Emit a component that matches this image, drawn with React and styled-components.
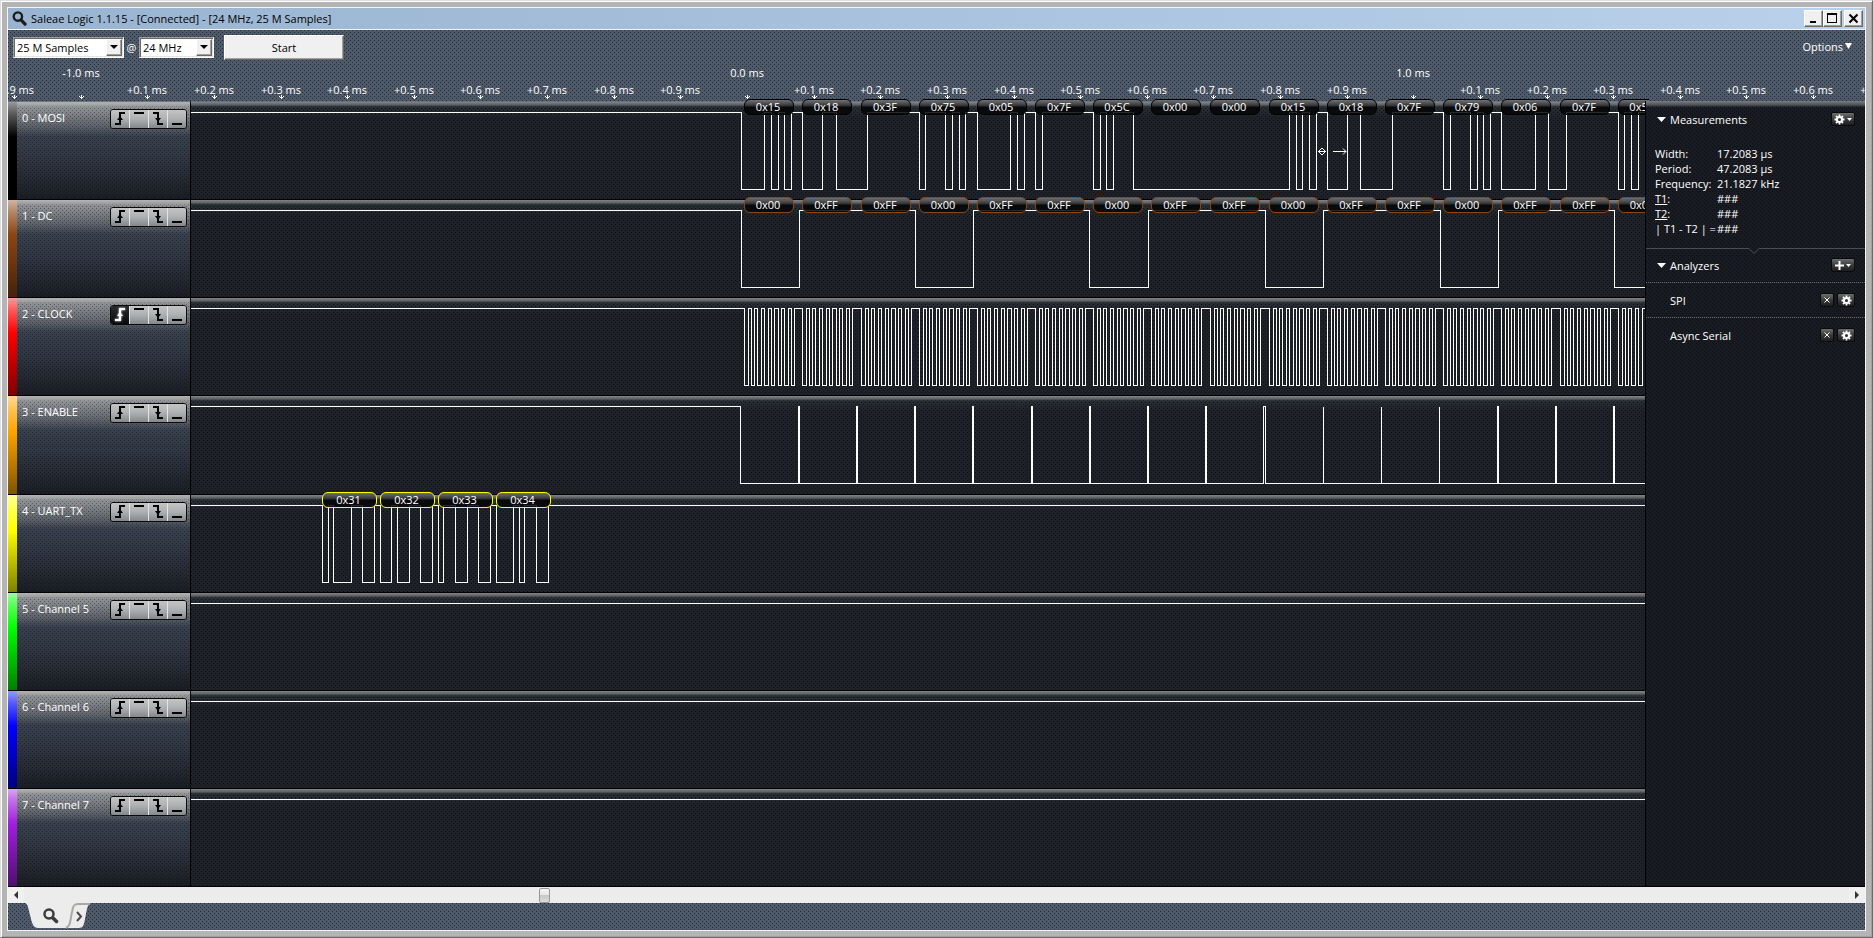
import React from "react";
import styled, { createGlobalStyle, css } from "styled-components";

const GlobalStyle = createGlobalStyle`
  *, *::before, *::after { box-sizing: border-box; }
  body { margin: 0; }
  body, button, select, input {
    font-family: "Open Sans", "Noto Sans", sans-serif;
    font-size: 11px;
    line-height: 15px;
  }
  button { padding: 0; border: 0; margin: 0; }
  ul, dl, dd, h1, h2 { margin: 0; padding: 0; font: inherit; }
  svg { display: block; }
`;

/* Perforated-metal texture: one dark pixel per tile, two staggered layers. */
const mesh = (dot) => css`
  background-image:
    conic-gradient(at 1px 1px, transparent 75%, ${dot} 0),
    conic-gradient(at 1px 1px, transparent 75%, ${dot} 0);
  background-size: 4px 4px;
  background-position: 0 0, 2px 2px;
`;

/* The same texture with a solid highlight above it and a shade below it. */
const glossMesh = (dot, highlight, shade) => css`
  background-image:
    ${highlight},
    conic-gradient(at 1px 1px, transparent 75%, ${dot} 0),
    conic-gradient(at 1px 1px, transparent 75%, ${dot} 0),
    ${shade};
  background-size: 100% 100%, 4px 4px, 4px 4px, 100% 100%;
  background-position: 0 0, 0 0, 2px 2px, 0 0;
`;

const Frame = styled.div`
  display: flex;
  min-height: 100vh;
  padding: 6px;
  background: #b4b4b4;
  border: 1px solid;
  border-color: #dedede #6a6a6a #6a6a6a #dedede;
  box-shadow: inset 1px 1px #fff, inset -1px -1px #a0a0a0;
`;

const Window = styled.main`
  flex: 1;
  min-width: 0;
  display: flex;
  flex-direction: column;
  border: 1px solid #f4f4f4;
`;

const TitleBar = styled.header`
  display: flex;
  align-items: center;
  height: 22px;
  padding: 0 2px 0 4px;
  background: linear-gradient(90deg, #99b4d1, #b9d1ea);
  border-bottom: 1px solid #f4f4f4;
`;

const Title = styled.h1`
  flex: 1;
  margin-left: 4px;
  color: #000;
`;

const WindowButton = styled.button`
  display: grid;
  place-items: center;
  width: 19px;
  height: 17px;
  margin-left: ${(p) => (p.$apart ? 2 : 0)}px;
  background: #f0f0f0;
  border: 1px solid;
  border-color: #fff #696969 #696969 #fff;
  box-shadow: inset -1px -1px #a0a0a0;
`;

const Deck = styled.div`
  background-color: #4e5969;
  ${mesh("#272d37")}
  color: #fff;
`;

const Toolbar = styled.div`
  display: flex;
  align-items: center;
  height: 34px;
  padding: 0 13px 0 5px;
`;

const Combo = styled.div`
  position: relative;
  width: ${(p) => p.$width}px;
  height: 21px;
  border: 1px solid;
  border-color: #a0a0a0 #fff #fff #a0a0a0;
  box-shadow: inset 1px 1px #696969, inset -1px -1px #e3e3e3;
  background: #fff;
`;

const ComboSelect = styled.select`
  appearance: none;
  width: 100%;
  height: 19px;
  padding: 0 18px 0 3px;
  border: 0;
  background: transparent;
  color: #000;
`;

const ComboArrow = styled.span`
  position: absolute;
  top: 1px;
  right: 1px;
  display: grid;
  place-items: center;
  width: 16px;
  height: 17px;
  background: #f0f0f0;
  color: #000;
  border: 1px solid;
  border-color: #fff #696969 #696969 #fff;
  box-shadow: inset -1px -1px #a0a0a0;
  pointer-events: none;
`;

const At = styled.span`
  width: 15px;
  text-align: center;
`;

const StartButton = styled.button`
  width: 120px;
  height: 25px;
  margin-left: 10px;
  background: #f0f0f0;
  color: #000;
  border: 1px solid;
  border-color: #fff #696969 #696969 #fff;
  box-shadow: inset -1px -1px #a0a0a0;
`;

const OptionsButton = styled.button`
  display: flex;
  align-items: center;
  gap: 2px;
  margin-left: auto;
  padding-bottom: 2px;
  background: none;
  color: #fff;
`;

const Ruler = styled.svg`
  width: 100%;
  height: 37px;
  fill: #fff;
  font-size: 11px;
`;

const Body = styled.div`
  flex: 1;
  display: grid;
  grid-template-columns: minmax(0, 1fr) 220px;
  border-bottom: 1px solid #000;
`;

const Channels = styled.ul`
  display: grid;
  grid-auto-rows: minmax(98px, 1fr);
  min-width: 0;
  list-style: none;
  overflow: clip;
  overflow-clip-margin: 4px;
`;

const Channel = styled.li`
  display: grid;
  grid-template-columns: 183px minmax(0, 1fr);
  min-width: 0;
`;

const ChannelHead = styled.div`
  display: flex;
  border-top: 1px solid ${(p) => (p.$first ? "#6d7580" : "#000")};
  border-right: 1px solid #000;
  background-color: #2c333e;
  ${glossMesh(
    "rgba(0, 0, 0, 0.36)",
    "linear-gradient(#b4b4b4, #9a9b9d 4px, transparent 5px)",
    "linear-gradient(#96989b, #898c90 8px, #5e636b 24px, #38404d 34px, #303743 55px, #1a1d24)"
  )}
`;

const ColorStrip = styled.span`
  width: 9px;
  background:
    linear-gradient(rgba(255, 255, 255, 0.6), rgba(255, 255, 255, 0.35) 12px, transparent 35px, rgba(0, 0, 0, 0.5)),
    ${(p) => p.$color};
`;

const ChannelName = styled.span`
  flex: 1;
  padding: 8px 0 0 5px;
  color: #fff;
`;

const TriggerGroup = styled.div`
  display: flex;
  align-self: flex-start;
  height: 20px;
  margin: 7px 3px 0 0;
  border: 1px solid #0a0a0a;
  border-radius: 3px;
  overflow: hidden;
`;

const TriggerButton = styled.button`
  width: 19px;
  color: ${(p) => (p.$on ? "#fff" : "#000")};
  background: ${(p) =>
    p.$on ? "linear-gradient(#2a2b2e, #0a0b0d)" : "linear-gradient(#c4c4c4, #adb0b2 50%, #85888b)"};
  &:first-child { width: 18px; }
  & + & { border-left: 1px solid #e4e4e4; }
  svg { filter: ${(p) => (p.$on ? "drop-shadow(0 0 1px #fff)" : "none")}; }
`;

const Plot = styled.div`
  position: relative;
  min-width: 0;
  border-top: 1px solid ${(p) => (p.$first ? "#6d7580" : "#000")};
  background-color: #1e2128;
  ${glossMesh(
    "#0f1115",
    "linear-gradient(#828486, #5c5f63 3px, #3a3e44 4px, transparent 5px)",
    "linear-gradient(#2c3037, #262a31 8px, transparent 16px)"
  )}
`;

const Trace = styled.svg`
  width: 100%;
  height: 96px;
  fill: none;
  stroke: #fff;
  shape-rendering: crispEdges;
`;

const Bubble = styled.span`
  position: absolute;
  top: -3px;
  width: ${(p) => p.$width}px;
  height: 16px;
  padding-right: 2px;
  border: 1px solid ${(p) => p.$edge};
  border-radius: 6px;
  background: linear-gradient(rgba(112, 114, 116, 0.95), rgba(45, 46, 48, 0.95) 6px, rgba(4, 5, 6, 0.92) 7px, rgba(6, 7, 8, 0.85));
  color: #fff;
  line-height: 14px;
  text-align: center;
  white-space: nowrap;
`;

const Side = styled.aside`
  position: relative;
  border-left: 1px solid #000;
  background-color: #181b21;
  ${glossMesh(
    "#0c0e12",
    "linear-gradient(#7c7e80, #4e5155 4px, transparent 6px)",
    "linear-gradient(#23262c, transparent 10px)"
  )}
  color: #fff;
`;

const PanelHead = styled.div`
  display: flex;
  align-items: center;
  height: 34px;
  padding: 0 10px 0 11px;
`;

const PanelTitle = styled.h2`
  flex: 1;
  margin-left: 4px;
`;

const Measurements = styled.section`
  height: 147px;
  padding-top: 1px;
`;

const Readings = styled.dl`
  display: grid;
  grid-template-columns: 62px 1fr;
  grid-auto-rows: 15px;
  margin-top: 10px;
  padding-left: 9px;
  white-space: nowrap;
`;

/* The section edge is drawn over the top of the next section. */
const Divider = styled.svg`
  width: 100%;
  height: 6px;
  margin-bottom: -6px;
  fill: none;
  stroke: #4c5056;
`;

const AnalyzerList = styled.ul`
  list-style: none;
`;

const AnalyzerRow = styled.li`
  display: flex;
  align-items: center;
  gap: 3px;
  height: 35px;
  padding: 0 10px 0 24px;
  border-top: 1px dotted #6a6d72;
`;

const AnalyzerName = styled.span`
  flex: 1;
`;

const GlossButton = styled.button`
  display: flex;
  align-items: center;
  justify-content: center;
  gap: 2px;
  width: ${(p) => p.$width}px;
  height: 14px;
  border: 1px solid #0a0a0a;
  border-radius: 2px;
  background: linear-gradient(#6c6d6f, #3a3b3d 50%, #1c1d1f);
  color: #fff;
`;

const ScrollBar = styled.div`
  display: flex;
  height: 16px;
  background: #ececec;
`;

const ScrollArrow = styled.button`
  display: grid;
  place-items: center;
  width: 16px;
  background: #f0f0f0;
`;

const ScrollRange = styled.input`
  flex: 1;
  min-width: 0;
  height: 16px;
  margin: 0;
  appearance: none;
  background: #ececec;
  &::-webkit-slider-thumb {
    appearance: none;
    width: 11px;
    height: 15px;
    border: 1px solid #979797;
    border-radius: 2px;
    background: linear-gradient(#f4f4f4, #e6e6e6 50%, #c8c8c8 50%, #dcdcdc);
  }
`;

const TabBar = styled.nav`
  height: 27px;
  padding-left: 17px;
  background-color: #4e5969;
  ${mesh("#272d37")}
`;

const TabButton = styled.button`
  display: block;
  background: none;
`;

/* Traces and bubbles share one x scale whose zero is the outer window edge. */
const PLOT_LEFT = 191;
const HIGH = 10;
const LOW = 87;
const FRAME_STARTS = [744, 802, 861, 919, 977, 1035, 1093, 1151, 1210, 1269, 1327, 1385, 1443, 1501, 1560, 1618];

const clockEdges = FRAME_STARTS.flatMap((start) =>
  Array.from({ length: 8 }, (_, bit) => [
    Math.floor(start + 0.5 + bit * 6.7),
    Math.floor(start + 0.5 + bit * 6.7 + 3.5),
  ]).flat()
);

const framed = (values) => values.map((text, i) => ({ x: FRAME_STARTS[i], text }));

const CHANNELS = [
  {
    name: "0 - MOSI",
    color: "#000",
    edge: "#000",
    bubbleWidth: 50,
    edges: [
      741, 764, 771, 778, 784, 791, 802, 822, 836, 867, 919, 925, 945, 952, 959, 965, 977, 1010, 1017, 1024, 1035,
      1042, 1093, 1100, 1106, 1113, 1133, 1289, 1296, 1302, 1309, 1316, 1327, 1347, 1360, 1392, 1443, 1450, 1470,
      1477, 1483, 1490, 1501, 1535, 1548, 1566, 1618, 1624, 1631, 1638,
    ],
    bubbles: framed([
      "0x15", "0x18", "0x3F", "0x75", "0x05", "0x7F", "0x5C", "0x00", "0x00", "0x15", "0x18", "0x7F", "0x79", "0x06",
      "0x7F", "0x5C",
    ]),
    cursor: true,
  },
  {
    name: "1 - DC",
    color: "#8b4513",
    edge: "#8b4513",
    bubbleWidth: 50,
    edges: [741, 799, 915, 973, 1089, 1148, 1265, 1323, 1440, 1498, 1614],
    bubbles: framed([
      "0x00", "0xFF", "0xFF", "0x00", "0xFF", "0xFF", "0x00", "0xFF", "0xFF", "0x00", "0xFF", "0xFF", "0x00", "0xFF",
      "0xFF", "0x00",
    ]),
  },
  { name: "2 - CLOCK", color: "#ff0000", edges: clockEdges, trigger: "rising" },
  {
    name: "3 - ENABLE",
    color: "#ffa500",
    edges: [
      740, 798, 799, 856, 857, 914, 915, 972, 973, 1031, 1032, 1089, 1090, 1147, 1148, 1205, 1206, 1263, 1265, 1323,
      1323, 1381, 1381, 1439, 1439, 1497, 1498, 1555, 1556, 1613, 1614,
    ],
  },
  {
    name: "4 - UART_TX",
    color: "#ffff00",
    edge: "#ffff00",
    bubbleWidth: 55,
    edges: [
      322, 328, 333, 351, 362, 374, 380, 391, 397, 409, 420, 432, 438, 443, 455, 467, 478, 490, 496, 513, 519, 524,
      536, 548,
    ],
    bubbles: [
      { x: 322, text: "0x31" },
      { x: 380, text: "0x32" },
      { x: 438, text: "0x33" },
      { x: 496, text: "0x34" },
    ],
  },
  { name: "5 - Channel 5", color: "#00ff00", edges: [] },
  { name: "6 - Channel 6", color: "#0000ff", edges: [] },
  { name: "7 - Channel 7", color: "#a01edc", edges: [] },
];

const tracePath = (edges) => {
  let level = HIGH;
  let d = `M0 ${HIGH + 0.5}`;
  edges.forEach((x) => {
    level = level === HIGH ? LOW : HIGH;
    d += `H${x - PLOT_LEFT + 0.5}V${level + 0.5}`;
  });
  return `${d}H4000`;
};

const TRIGGERS = [
  {
    id: "rising",
    label: "Rising edge",
    shape: (
      <>
        <path d="M4 14H9V3H14" />
        <path d="M9 6L12 10H6Z" fill="currentColor" stroke="none" />
      </>
    ),
  },
  { id: "high", label: "High level", shape: <path d="M4 3H14" /> },
  {
    id: "falling",
    label: "Falling edge",
    shape: (
      <>
        <path d="M4 3H9V14H14" />
        <path d="M9 12L12 8H6Z" fill="currentColor" stroke="none" />
      </>
    ),
  },
  { id: "low", label: "Low level", shape: <path d="M4 14H14" /> },
];

const TICK_PITCH = 66.63;
const TRIGGER_X = 739;

const ticks = Array.from({ length: 29 }, (_, i) => {
  const step = i - 11;
  const tenth = ((step % 10) + 10) % 10;
  return {
    x: Math.round(TRIGGER_X + step * TICK_PITCH),
    major: tenth === 0,
    text: tenth === 0 ? `${(step / 10).toFixed(1)} ms` : `+0.${tenth} ms`,
  };
});

const Magnifier = ({ size, color }) => (
  <svg width={size} height={size} viewBox="0 0 14 14" fill="none" stroke={color}>
    <circle cx="5.5" cy="5.2" r="3.9" strokeWidth="2.2" />
    <path d="M8.6 8.6L12.2 12.2" strokeWidth="3" strokeLinecap="round" />
  </svg>
);

const Triangle = ({ width, height }) => (
  <svg width={width} height={height} viewBox="0 0 8 4" preserveAspectRatio="none" fill="currentColor">
    <path d="M0 0H8L4 4Z" />
  </svg>
);

const Gear = () => (
  <svg width="11" height="11" viewBox="0 0 11 11" fill="none" stroke="currentColor">
    <circle cx="5.5" cy="5.5" r="2.6" strokeWidth="2" />
    <path
      d="M5.5 .5V2.5M5.5 8.5V10.5M.5 5.5H2.5M8.5 5.5H10.5M2 2L3.2 3.2M7.8 7.8L9 9M9 2L7.8 3.2M3.2 7.8L2 9"
      strokeWidth="1.8"
    />
  </svg>
);

const ChannelRow = ({ channel, first }) => (
  <Channel>
    <ChannelHead $first={first}>
      <ColorStrip $color={channel.color} />
      <ChannelName>{channel.name}</ChannelName>
      <TriggerGroup role="group" aria-label={`${channel.name} trigger`}>
        {TRIGGERS.map((t) => (
          <TriggerButton key={t.id} type="button" aria-label={t.label} $on={channel.trigger === t.id}>
            <svg width="18" height="18" viewBox="0 0 18 18" fill="none" stroke="currentColor" strokeWidth="2">
              {t.shape}
            </svg>
          </TriggerButton>
        ))}
      </TriggerGroup>
    </ChannelHead>
    <Plot $first={first}>
      <Trace aria-hidden="true">
        <path d={tracePath(channel.edges)} />
        {channel.cursor && (
          <g shapeRendering="auto">
            <path d="M1127 49.5H1135M1131 46L1134.5 49.5L1131 53L1127.5 49.5Z" />
            <path d="M1142 49.5H1155M1152 46.5L1155 49.5L1152 52.5" />
          </g>
        )}
      </Trace>
      {(channel.bubbles || []).map((b) => (
        <Bubble key={b.x} $width={channel.bubbleWidth} $edge={channel.edge} style={{ left: b.x - PLOT_LEFT }}>
          {b.text}
        </Bubble>
      ))}
    </Plot>
  </Channel>
);

const READINGS = [
  ["Width:", "17.2083 µs"],
  ["Period:", "47.2083 µs"],
  ["Frequency:", "21.1827 kHz"],
  [<><u>T1</u>:</>, "###"],
  [<><u>T2</u>:</>, "###"],
  ["| T1 - T2 | =", "###"],
];

export default function App() {
  return (
    <Frame>
      <GlobalStyle />
      <Window>
        <TitleBar>
          <Magnifier size={15} color="#1c1c1c" />
          <Title>Saleae Logic 1.1.15 - [Connected] - [24 MHz, 25 M Samples]</Title>
          <WindowButton type="button" aria-label="Minimize">
            <svg width="11" height="11" stroke="#000" strokeWidth="2"><path d="M2 9H8" /></svg>
          </WindowButton>
          <WindowButton type="button" aria-label="Maximize">
            <svg width="11" height="11" fill="none" stroke="#000" shapeRendering="crispEdges">
              <path d="M.5 .5H9.5V9.5H.5ZM.5 1.5H9.5" />
            </svg>
          </WindowButton>
          <WindowButton type="button" aria-label="Close" $apart>
            <svg width="11" height="11" stroke="#000" strokeWidth="2"><path d="M1.5 1.5L9.5 9.5M9.5 1.5L1.5 9.5" /></svg>
          </WindowButton>
        </TitleBar>

        <Deck>
          <Toolbar>
            <Combo $width={111}>
              <ComboSelect aria-label="Sample count" defaultValue="25 M Samples">
                <option>25 M Samples</option>
              </ComboSelect>
              <ComboArrow><Triangle width={8} height={4} /></ComboArrow>
            </Combo>
            <At>@</At>
            <Combo $width={75}>
              <ComboSelect aria-label="Sample rate" defaultValue="24 MHz">
                <option>24 MHz</option>
              </ComboSelect>
              <ComboArrow><Triangle width={8} height={4} /></ComboArrow>
            </Combo>
            <StartButton type="button">Start</StartButton>
            <OptionsButton type="button">
              Options
              <Triangle width={7} height={6} />
            </OptionsButton>
          </Toolbar>
          <Ruler>
            {ticks.map((t) => (
              <g key={t.x} transform={`translate(${t.x} 0)`}>
                <text x="0" y={t.major ? 13 : 30} textAnchor="middle">{t.text}</text>
                <path d="M0 31h1v2h1v-1h1v1h-1v1h-1v1h-1v-1h-1v-1h-1v-1h1v1h1z" shapeRendering="crispEdges" />
              </g>
            ))}
          </Ruler>
        </Deck>

        <Body>
          <Channels>
            {CHANNELS.map((c, i) => (
              <ChannelRow key={c.name} channel={c} first={i === 0} />
            ))}
          </Channels>
          <Side>
            <Measurements>
              <PanelHead>
                <Triangle width={9} height={5} />
                <PanelTitle>Measurements</PanelTitle>
                <GlossButton type="button" aria-label="Measurement settings" $width={24}>
                  <Gear />
                  <Triangle width={5} height={3} />
                </GlossButton>
              </PanelHead>
              <Readings>
                {READINGS.map(([label, value], i) => (
                  <React.Fragment key={i}>
                    <dt>{label}</dt>
                    <dd>{value}</dd>
                  </React.Fragment>
                ))}
              </Readings>
            </Measurements>
            <Divider viewBox="0 0 219 6" preserveAspectRatio="none">
              <path d="M0 .5H103L108 5.5L113 .5H219" />
            </Divider>
            <section>
              <PanelHead>
                <Triangle width={9} height={5} />
                <PanelTitle>Analyzers</PanelTitle>
                <GlossButton type="button" aria-label="Add analyzer" $width={24}>
                  <svg width="9" height="9" stroke="currentColor" strokeWidth="2"><path d="M4.5 0V9M0 4.5H9" /></svg>
                  <Triangle width={5} height={3} />
                </GlossButton>
              </PanelHead>
              <AnalyzerList>
                {["SPI", "Async Serial"].map((name) => (
                  <AnalyzerRow key={name}>
                    <AnalyzerName>{name}</AnalyzerName>
                    <GlossButton type="button" aria-label={`Remove ${name}`} $width={14}>
                      <svg width="6" height="6" stroke="currentColor"><path d="M.5 .5L5.5 5.5M5.5 .5L.5 5.5" /></svg>
                    </GlossButton>
                    <GlossButton type="button" aria-label={`${name} settings`} $width={18}>
                      <Gear />
                    </GlossButton>
                  </AnalyzerRow>
                ))}
              </AnalyzerList>
            </section>
          </Side>
        </Body>

        <ScrollBar>
          <ScrollArrow type="button" aria-label="Scroll left">
            <svg width="4" height="8" fill="#333"><path d="M4 0V8L0 4Z" /></svg>
          </ScrollArrow>
          <ScrollRange type="range" aria-label="Time position" min="0" max="1000" defaultValue="284" />
          <ScrollArrow type="button" aria-label="Scroll right">
            <svg width="4" height="8" fill="#333"><path d="M0 0V8L4 4Z" /></svg>
          </ScrollArrow>
        </ScrollBar>

        <TabBar>
          <TabButton type="button" aria-label="Capture tab">
            <svg width="67" height="26" fill="none">
              <path d="M0 0H66C62 1 62 7 60 16C59 22 58 25 54 25H13C8 25 7 20 5 12C3 4 3 1 0 0Z" fill="#ececec" />
              <path d="M41 25C46 23 45 17 47 9C48 3 49 1 53 1H65" stroke="#a9a9a4" strokeWidth="2" />
              <path d="M52 9L56 13.500L52 18" stroke="#4a4a4a" strokeWidth="2" />
              <circle cx="24" cy="11" r="4.500" stroke="#3c3c3c" strokeWidth="2.500" />
              <path d="M28 15L31.500 18.500" stroke="#3c3c3c" strokeWidth="3.500" strokeLinecap="round" />
            </svg>
          </TabButton>
        </TabBar>
      </Window>
    </Frame>
  );
}
